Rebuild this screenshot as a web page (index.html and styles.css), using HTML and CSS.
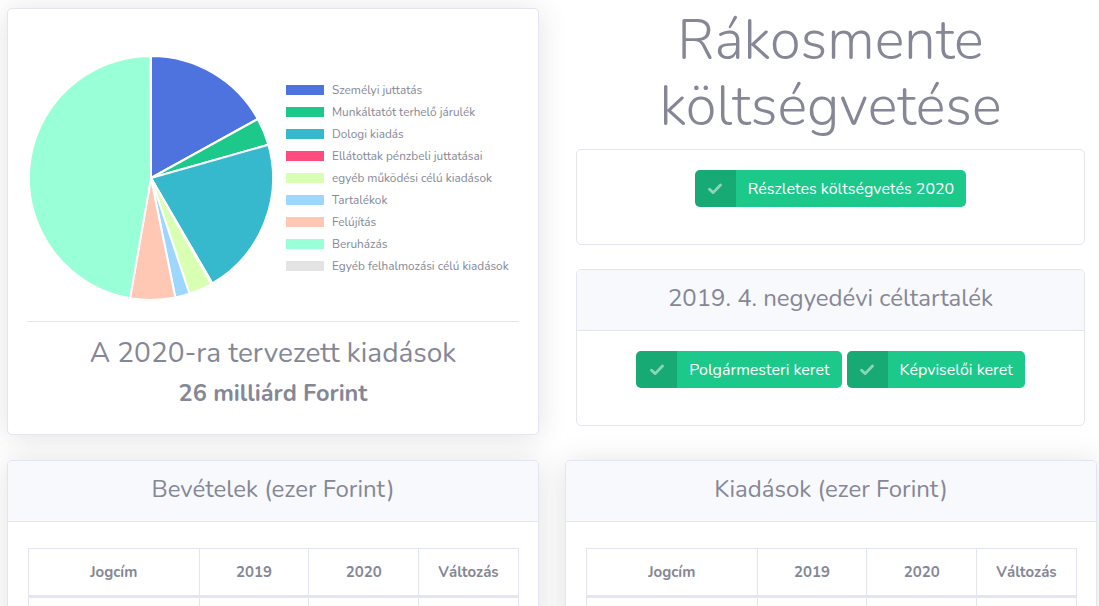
FILE: index.html
```html
<!DOCTYPE html>
<html lang="hu">
<head>
<meta charset="utf-8">
<title>Rákosmente költségvetése</title>
<link rel="stylesheet" href="styles.css">
</head>
<body>
<div class="page">
  <div class="card card-shadow chart-card">
    <div class="chart-body">
      <div class="chart-row">
        <svg class="pie" width="248" height="248" viewBox="0 0 248 248">
          <g stroke="#fff" stroke-width="2" stroke-linejoin="round">
            <path fill="#4e73df" d="M124 124 L124 2 A122 122 0 0 1 230.8 65 Z"/>
            <path fill="#1cc88a" d="M124 124 L230.8 65 A122 122 0 0 1 241.4 90.8 Z"/>
            <path fill="#36b9cc" d="M124 124 L241.4 90.8 A122 122 0 0 1 185.4 229.4 Z"/>
            <path fill="#ff4b7d" d="M124 124 L185.4 229.4 A122 122 0 0 1 184.4 230 Z"/>
            <path fill="#d9ffb3" d="M124 124 L184.4 230 A122 122 0 0 1 162.5 239.8 Z"/>
            <path fill="#9dd6ff" d="M124 124 L162.5 239.8 A122 122 0 0 1 148.3 243.5 Z"/>
            <path fill="#ffc8b4" d="M124 124 L148.3 243.5 A122 122 0 0 1 103 244.2 Z"/>
            <path fill="#99ffd6" d="M124 124 L103 244.2 A122 122 0 0 1 123.6 2 Z"/>
          </g>
        </svg>
        <ul class="legend">
          <li><span class="swatch" style="background:#4e73df"></span>Személyi juttatás</li>
          <li><span class="swatch" style="background:#1cc88a"></span>Munkáltatót terhelő járulék</li>
          <li><span class="swatch" style="background:#36b9cc"></span>Dologi kiadás</li>
          <li><span class="swatch" style="background:#ff4b7d"></span>Ellátottak pénzbeli juttatásai</li>
          <li><span class="swatch" style="background:#d9ffb3"></span>egyéb működési célú kiadások</li>
          <li><span class="swatch" style="background:#9dd6ff"></span>Tartalékok</li>
          <li><span class="swatch" style="background:#ffc8b4"></span>Felújítás</li>
          <li><span class="swatch" style="background:#99ffd6"></span>Beruházás</li>
          <li><span class="swatch" style="background:#e4e4e4"></span>Egyéb felhalmozási célú kiadások</li>
        </ul>
      </div>
      <hr class="divider">
      <h3 class="chart-caption">A 2020-ra tervezett kiadások</h3>
      <h5 class="chart-total">26 milliárd Forint</h5>
    </div>
  </div>

  <div class="side">
    <h1 class="title">Rákosmente költségvetése</h1>
    <div class="card">
      <div class="card-body center first-body">
        <a class="btn" href="#"><span class="icon"><svg width="14" height="12" viewBox="0 0 14 12"><path d="M1.5 6.2 L5.2 9.6 L12.5 2" fill="none" stroke="currentColor" stroke-width="2.8" stroke-linecap="round" stroke-linejoin="round"/></svg></span><span class="text">Részletes költségvetés 2020</span></a>
      </div>
    </div>
    <div class="card card-gap">
      <div class="card-header">2019. 4. negyedévi céltartalék</div>
      <div class="card-body center second-body">
        <a class="btn" href="#"><span class="icon"><svg width="14" height="12" viewBox="0 0 14 12"><path d="M1.5 6.2 L5.2 9.6 L12.5 2" fill="none" stroke="currentColor" stroke-width="2.8" stroke-linecap="round" stroke-linejoin="round"/></svg></span><span class="text">Polgármesteri keret</span></a>
        <a class="btn" href="#"><span class="icon"><svg width="14" height="12" viewBox="0 0 14 12"><path d="M1.5 6.2 L5.2 9.6 L12.5 2" fill="none" stroke="currentColor" stroke-width="2.8" stroke-linecap="round" stroke-linejoin="round"/></svg></span><span class="text">Képviselői keret</span></a>
      </div>
    </div>
  </div>

  <div class="card card-shadow">
    <div class="card-header">Bevételek (ezer Forint)</div>
    <div class="card-body table-body">
      <table class="data">
        <thead><tr><th class="c1">Jogcím</th><th class="c2">2019</th><th class="c2">2020</th><th class="c3">Változás</th></tr></thead>
        <tbody><tr><td></td><td></td><td></td><td></td></tr></tbody>
      </table>
    </div>
  </div>

  <div class="card card-shadow">
    <div class="card-header">Kiadások (ezer Forint)</div>
    <div class="card-body table-body">
      <table class="data">
        <thead><tr><th class="c1">Jogcím</th><th class="c2">2019</th><th class="c2">2020</th><th class="c3">Változás</th></tr></thead>
        <tbody><tr><td></td><td></td><td></td><td></td></tr></tbody>
      </table>
    </div>
  </div>
</div>
</body>
</html>
```

FILE: styles.css
```css
* { box-sizing: border-box; }
html, body { margin: 0; padding: 0; background: #fff; }
body {
  font-family: "Nunito", "Lato", "Noto Sans", sans-serif;
  color: #858796;
  font-size: 16px;
  overflow: hidden;
}
.page {
  display: grid;
  grid-template-columns: 532px 532px;
  column-gap: 26px;
  row-gap: 25px;
  padding: 8px 0 0 7px;
  align-items: start;
}
.card {
  background: #fff;
  border: 1px solid #e3e6f0;
  border-radius: 5px;
  overflow: hidden;
}
.card-shadow { box-shadow: 0 2px 28px 0 rgba(58, 59, 69, 0.15); }
.chart-card { height: 427px; }
.chart-body { padding: 19px 19px 0; }
.chart-row {
  display: flex;
  align-items: flex-start;
  height: 293px;
  padding-top: 26px;
}
.pie { display: block; flex: none; }
.legend {
  list-style: none;
  margin: 25px 0 0 11px;
  padding: 0;
  font-size: 11.8px;
}
.legend li {
  display: flex;
  align-items: center;
  height: 22px;
  white-space: nowrap;
}
.swatch {
  display: inline-block;
  width: 38px;
  height: 10px;
  margin-right: 8px;
}
.divider {
  margin: 0;
  border: 0;
  border-top: 1px solid #e3e6f0;
}
.chart-caption {
  margin: 14px 0 0;
  font-size: 28px;
  font-weight: 400;
  line-height: 34px;
  text-align: center;
}
.chart-total {
  margin: 8px 0 0;
  font-size: 23.5px;
  font-weight: 700;
  line-height: 30px;
  text-align: center;
}
.side { padding: 0 12px 0 11px; }
.title {
  margin: 0;
  font-size: 56px;
  font-weight: 300;
  line-height: 66px;
  text-align: center;
}
.title + .card { margin-top: 9px; }
.card-gap { margin-top: 24px; }
.card-header {
  background: #f8f9fc;
  border-bottom: 1px solid #e3e6f0;
  height: 61px;
  padding-bottom: 5px;
  display: flex;
  align-items: center;
  justify-content: center;
  font-size: 24px;
}
.card-body.center {
  display: flex;
  justify-content: center;
  gap: 5px;
}
.first-body { padding: 20px 20px 37px; }
.second-body { padding: 20px 20px 37px; }
.btn {
  display: inline-flex;
  align-items: stretch;
  height: 37px;
  background: #1cc88a;
  color: #fff;
  border-radius: 5px;
  overflow: hidden;
  text-decoration: none;
  font-size: 16px;
}
.btn .icon {
  width: 41px;
  display: flex;
  align-items: center;
  justify-content: center;
  background: rgba(0, 0, 0, 0.15);
  color: rgba(255, 255, 255, 0.5);
}
.btn .text {
  display: flex;
  align-items: center;
  padding: 0 12px 0 12px;
}
.table-body { padding: 26px 20px 20px; }
.data {
  width: 491px;
  border-collapse: collapse;
  border: 1px solid #e3e6f0;
}
.data th {
  height: 48px;
  font-size: 15px;
  font-weight: 700;
  text-align: center;
  border: 1px solid #e3e6f0;
  border-bottom: 3px solid #e3e6f0;
  padding: 0 12px;
}
.data td { height: 40px; border: 1px solid #e3e6f0; }
.data .c1 { width: 171px; }
.data .c2 { width: 110px; }
.data .c3 { width: 100px; }
```
